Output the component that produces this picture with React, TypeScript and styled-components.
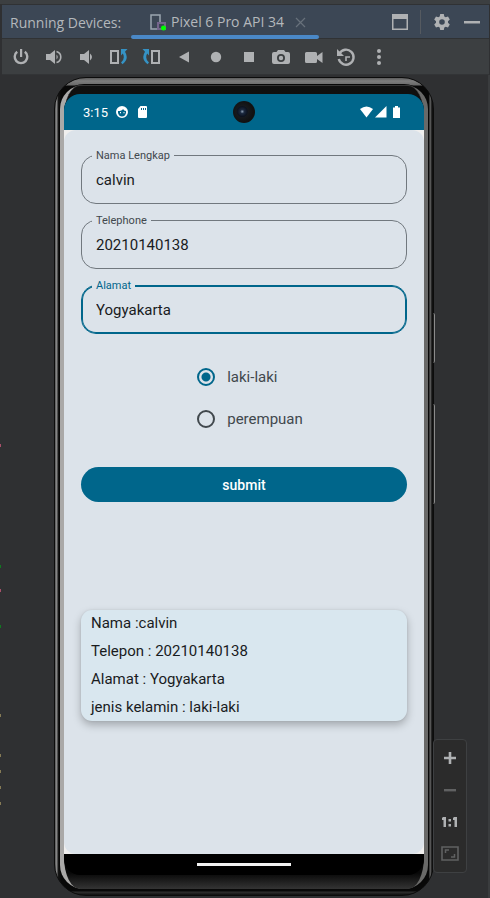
import React, { useState } from "react";
import styled, { createGlobalStyle } from "styled-components";

const GlobalStyle = createGlobalStyle`
  * { box-sizing: border-box; }
  body { margin: 0; background: #2f3032; }
  button, input { font: inherit; color: inherit; }
  button { border: 0; padding: 0; background: none; cursor: pointer; }
  svg { display: block; }
`;

const Window = styled.div`
  min-height: 100vh;
  display: flex;
  flex-direction: column;
  border-top: 4px solid #3c3f41;
  background: #2f3032;
`;

const TitleBar = styled.header`
  height: 35px;
  display: flex;
  align-items: stretch;
  margin: 0 1px 0 2px;
  padding: 0 8px;
  border-top: 1px solid #303234;
  border-bottom: 1px solid #303234;
  background: #3c4755;
  color: #b4b8bc;
  font: 14px/35px "Open Sans", "Noto Sans", sans-serif;
  white-space: nowrap;
`;

const Title = styled.span`
  width: 121px;
  flex: none;
`;

const Tab = styled.div`
  width: 188px;
  flex: none;
  display: flex;
  align-items: center;
  gap: 4px;
  padding-left: 18px;
  position: relative;
  &::after {
    content: "";
    position: absolute;
    inset: auto 0 -1px 0;
    height: 4px;
    border-radius: 2px;
    background: #4a88c7;
  }
`;

const TabName = styled.span`
  width: 119px;
`;

const TitleActions = styled.div`
  flex: 1;
  display: flex;
  justify-content: flex-end;
  align-items: center;
  gap: 12px;
  color: #afb1b3;
`;

const Divider = styled.span`
  width: 1px;
  height: 24px;
  background: #555a60;
`;

const IconButton = styled.button`
  display: flex;
  align-items: center;
  justify-content: center;
`;

const Toolbar = styled.nav`
  height: 36px;
  margin: 0 1px 0 2px;
  background: #3c3f41;
  border-bottom: 1px solid #323436;
  color: #afb1b3;
`;

const ToolGrid = styled.div`
  height: 100%;
  max-width: 393px;
  padding-left: 3px;
  display: grid;
  grid-template-columns: repeat(12, 1fr);
`;

const tick = (color: string, y: number) =>
  `linear-gradient(${color}, ${color}) 0 ${y}px / 1px 3px no-repeat`;

const Stage = styled.main`
  flex: 1;
  display: flex;
  position: relative;
  padding: 2px 56px 2px 54px;
  border-right: 2px solid #3a3c3e;
  background: ${[
    tick("#a8506a", 369),
    tick("#107a20", 490),
    tick("#a8506a", 514),
    tick("#107a20", 550),
    tick("#857a55", 639),
    tick("#857a55", 679),
    tick("#857a55", 695),
    tick("#857a55", 711),
    tick("#857a55", 727),
  ].join(", ")}, #2f3032;
`;

const Phone = styled.div`
  flex: 1;
  display: flex;
  position: relative;
  margin-right: -2px;
  padding: 7px 5px 6px;
  border: 1px solid #0c0c0c;
  border-radius: 32px;
  background: linear-gradient(#5c5c5c 0, #7d7d7d 3px, #6a6a6a 7px, transparent 8px),
    linear-gradient(to top, #101010 0, #303030 3px, #080808 4px, transparent 6px),
    linear-gradient(to right, #444 0, #858585 1px, #858585 2px, #181818 3px, #080808 6px,
      #080808 calc(100% - 4px), #6c6c6c calc(100% - 3px), #101010 calc(100% - 1px));
`;

const SideKey = styled.span<{ $top: number; $height: number }>`
  position: absolute;
  left: 100%;
  top: ${(p) => p.$top}px;
  width: 2px;
  height: ${(p) => p.$height}px;
  border-right: 1px solid #8b8b8b;
  border-radius: 0 2px 2px 0;
  background: #202020;
`;

const Rim = styled.div`
  flex: 1;
  display: flex;
  padding: 0 4px;
  border-radius: 24px;
  background: linear-gradient(to right, #aaa9a8 0, #aaa9a8 50%, #696968 50%);
  box-shadow: 0 0 0 1px #080808;
`;

const Bezel = styled.div`
  flex: 1;
  display: flex;
  padding: 8px 0 14px;
  border-top: 1px solid #343434;
  border-radius: 16px / 32px;
  background: linear-gradient(#101010 0, #080808 50%, #080808 calc(100% - 16px), #343434 100%);
`;

const Screen = styled.section`
  flex: 1;
  min-width: 0;
  display: flex;
  flex-direction: column;
  position: relative;
  overflow: hidden;
  border-radius: 16px;
  background: #000;
  font-family: Roboto, sans-serif;
`;

const StatusBar = styled.div`
  height: 36px;
  display: flex;
  align-items: center;
  gap: 8px;
  padding: 0 21px 0 19px;
  background: #00668b;
  color: #fff;
  font-size: 13px;
`;

const StatusRight = styled.div`
  margin-left: auto;
  display: flex;
  align-items: center;
  gap: 2px;
`;

const Camera = styled.span`
  position: absolute;
  top: 7px;
  left: 50%;
  margin-left: -11px;
  width: 22px;
  height: 22px;
  border-radius: 50%;
  background: radial-gradient(circle at 42% 48%, #8fa0b4 0, #1c2a40 2px, #0d1320 5px, #16191d 6px, #111 11px);
`;

const Surface = styled.div`
  flex: 1;
  background: #f0efee;
`;

const Page = styled.form`
  height: 100%;
  display: flex;
  flex-direction: column;
  padding: 25px 17px 0;
  border-radius: 12px;
  background: #dce3ea;
  color: #191c1e;
  font-size: 15px;
`;

const Fields = styled.div`
  display: flex;
  flex-direction: column;
  gap: 16px;
`;

const Field = styled.div<{ $active: boolean }>`
  position: relative;
  height: 49px;
  border: 1px solid ${(p) => (p.$active ? "#00668b" : "#71787e")};
  border-radius: 15px;
  box-shadow: ${(p) => (p.$active ? "inset 0 0 0 1px #00668b" : "none")};
`;

const FieldLabel = styled.label<{ $active: boolean }>`
  position: absolute;
  top: -7px;
  left: 10px;
  padding: 0 4px;
  background: #dce3ea;
  color: ${(p) => (p.$active ? "#00668b" : "#41484d")};
  font-size: 11px;
  line-height: 14px;
`;

const FieldInput = styled.input`
  width: 100%;
  height: 100%;
  padding: 0 14px;
  border: 0;
  outline: 0;
  background: transparent;
`;

const Choices = styled.div`
  align-self: center;
  margin-top: 22px;
  color: #41484d;
`;

const Choice = styled.label`
  height: 42px;
  display: flex;
  align-items: center;
`;

const Radio = styled.input`
  appearance: none;
  width: 18px;
  height: 18px;
  margin: 0 12px;
  border: 2px solid #41484d;
  border-radius: 50%;
  &:checked {
    border-color: #00668b;
    background: radial-gradient(circle, #00668b 4px, transparent 5px);
  }
`;

const Submit = styled.button`
  height: 35px;
  margin-top: 27px;
  border-radius: 18px;
  background: #00668b;
  color: #fff;
  font-size: 14px;
  font-weight: 500;
`;

const Summary = styled.div`
  display: flex;
  flex-direction: column;
  gap: 1px;
  margin-top: 108px;
  padding-left: 10px;
  border-radius: 11px;
  background: #d9e7ef;
  box-shadow: 0 4px 8px rgba(0, 0, 0, 0.26), 0 0 2px rgba(0, 0, 0, 0.1);
  line-height: 27px;
`;

const NavBar = styled.div`
  height: 21px;
  display: flex;
  justify-content: center;
  padding-top: 9px;
`;

const Handle = styled.span`
  width: 94px;
  height: 3px;
  background: #f2f2f2;
`;

const ZoomPanel = styled.aside`
  position: absolute;
  right: 21px;
  bottom: 25px;
  width: 34px;
  padding: 2px 0;
  display: flex;
  flex-direction: column;
  border: 1px solid #3e4042;
  border-radius: 4px;
  background: #2b2b2b;
`;

const ZoomButton = styled.button<{ $dim?: boolean }>`
  height: 32px;
  display: flex;
  align-items: center;
  justify-content: center;
  color: ${(p) => (p.$dim ? "#606162" : "#afb1b3")};
`;

const Icon = ({ children, size = 20 }: { children: React.ReactNode; size?: number }) => (
  <svg width={size} height={size} viewBox={`0 0 ${size} ${size}`} fill="currentColor" aria-hidden="true">
    {children}
  </svg>
);

const line = { fill: "none", stroke: "currentColor", strokeWidth: 2 };

const tools: { name: string; icon: React.ReactNode }[] = [
  {
    name: "Power",
    icon: <><path d="M6.2 4.8a6.3 6.3 0 1 0 7.6 0" {...line} strokeWidth={2.4} /><path d="M9 2h2.2v8H9z" /></>,
  },
  {
    name: "Volume up",
    icon: <><path d="M2 7h4l5-4v14l-5-4H2z" /><path d="M12.5 7.5q2.500 2.500 0 5z" /><path d="M12.5 4.400a5.800 5.800 0 0 1 0 11.200" {...line} strokeWidth={1.6} /></>,
  },
  { name: "Volume down", icon: <><path d="M4 7h4l5-4v14l-5-4H4z" /><path d="M14 6.500q4 3.500 0 7z" /></> },
  {
    name: "Rotate left",
    icon: <><path d="M2 4h7v12H2z" {...line} /><path d="M12 2h6.500L16 4.800q4.500 7-2.500 12.500l-1.500-1.700q4.500-4 1.800-9L12 8.500z" fill="#3592c4" /></>,
  },
  {
    name: "Rotate right",
    icon: <><path d="M11 4h7v12h-7z" {...line} /><path d="M8 2H1.500L4 4.800q-4.500 7 2.500 12.500L8 15.600q-4.500-4-1.800-9L8 8.500z" fill="#3592c4" /></>,
  },
  { name: "Back", icon: <path d="M5 10l10-5.500v11z" /> },
  { name: "Home", icon: <circle cx="10" cy="10" r="5.2" /> },
  { name: "Overview", icon: <path d="M5 5h10v10H5z" /> },
  {
    name: "Screenshot",
    icon: <path fillRule="evenodd" d="M7 3h6l1.5 2H17q2 0 2 2v8q0 2-2 2H3q-2 0-2-2V7q0-2 2-2h2.5zM10 7a4 4 0 1 0 0 8a4 4 0 0 0 0-8zm0 1.8a2.2 2.2 0 1 1 0 4.400a2.200 2.200 0 0 1 0-4.400z" />,
  },
  { name: "Record", icon: <path d="M2.5 5h9q1.500 0 1.500 1.500V9l5.500-4v11L13 12v2.500q0 1.500-1.500 1.500h-9Q1 16 1 14.500v-8Q1 5 2.500 5z" /> },
  {
    name: "Snapshots",
    icon: <><path d="M3.500 6.500A7.500 7.500 0 1 1 2.800 12" {...line} strokeWidth={2.4} /><path d="M1 2v7h7z" /><path d="M10 14v-4h4" {...line} strokeWidth={1.6} /></>,
  },
  { name: "More", icon: <><circle cx="10" cy="4" r="2" /><circle cx="10" cy="10" r="2" /><circle cx="10" cy="16" r="2" /></> },
];

export default function App() {
  const [values, setValues] = useState({ nama: "calvin", telepon: "20210140138", alamat: "Yogyakarta" });
  const [gender, setGender] = useState("laki-laki");
  const [active, setActive] = useState("alamat");
  const fields: { key: keyof typeof values; label: string }[] = [
    { key: "nama", label: "Nama Lengkap" },
    { key: "telepon", label: "Telephone" },
    { key: "alamat", label: "Alamat" },
  ];

  return (
    <Window>
      <GlobalStyle />
      <TitleBar>
        <Title>Running Devices:</Title>
        <Tab>
          <svg width="18" height="20" viewBox="0 0 18 20" aria-hidden="true">
            <path d="M2 3h9v14H2z" fill="none" stroke="#9aa7b0" strokeWidth="1.5" />
            <path d="M9 11h7v6H9z" fill="#3c4755" stroke="#75658c" strokeWidth="2" />
            <circle cx="14.5" cy="16" r="2.5" fill="#0f0" />
          </svg>
          <TabName>Pixel 6 Pro API 34</TabName>
          <IconButton aria-label="Close tab">
            <svg width="12" height="12" viewBox="0 0 12 12" aria-hidden="true">
              <path d="M2 2l9 9M11 2l-9 9" stroke="#68717b" strokeWidth="1.2" />
            </svg>
          </IconButton>
        </Tab>
        <TitleActions>
          <IconButton aria-label="Window mode">
            <Icon size={16}><path fillRule="evenodd" d="M0 0h16v16H0zM1.500 5v9.500h13V5z" /></Icon>
          </IconButton>
          <Divider />
          <IconButton aria-label="Settings">
            <Icon size={18}>
              <path
                fillRule="evenodd"
                d="M7.200 1h3.600l.5 2.400 1.400.8 2.300-.8 1.800 3.100L15 8.200v1.600l1.800 1.700-1.800 3.100-2.300-.8-1.400.8-.5 2.400H7.200l-.5-2.400-1.400-.8-2.300.8-1.800-3.100L3 9.800V8.200L1.200 6.500 3 3.400l2.300.8 1.400-.8zM9 6.200a2.800 2.800 0 1 0 0 5.600a2.800 2.800 0 0 0 0-5.600z"
              />
            </Icon>
          </IconButton>
          <IconButton aria-label="Hide">
            <Icon size={18}><path d="M1 8h16v2.500H1z" /></Icon>
          </IconButton>
        </TitleActions>
      </TitleBar>

      <Toolbar aria-label="Device controls">
        <ToolGrid>
          {tools.map((t) => (
            <IconButton key={t.name} aria-label={t.name}><Icon>{t.icon}</Icon></IconButton>
          ))}
        </ToolGrid>
      </Toolbar>

      <Stage>
        <Phone>
          <SideKey $top={235} $height={50} />
          <SideKey $top={326} $height={100} />
          <Rim>
            <Bezel>
              <Screen>
                <StatusBar>
                  <span>3:15</span>
                  <Icon size={12}>
                    <path fillRule="evenodd" d="M6 0a6 6 0 1 0 0 12A6 6 0 0 0 6 0zM2 5q4 0 5-2q1 2 3 2v2q-1 3.500-4 3.500T2 7zM4 6v1.300h1V6zm3.500 0v1.300h1V6z" />
                  </Icon>
                  <Icon size={12}>
                    <path fillRule="evenodd" d="M4.500 0H10q1 0 1 1v10q0 1-1 1H3q-1 0-1-1V3zM5 2v2h1V2zm2 0v2h1V2zm2 0v2h1V2z" />
                  </Icon>
                  <StatusRight>
                    <svg width="13" height="12" viewBox="0 0 13 12" fill="#fff" aria-hidden="true"><path d="M0 3q6.500-5 13 0L6.500 11.500z" /></svg>
                    <svg width="12" height="12" viewBox="0 0 12 12" fill="#fff" aria-hidden="true"><path d="M0 11.500L11.500 0v11.500z" /></svg>
                    <svg width="14" height="12" viewBox="0 0 14 12" fill="#fff" aria-hidden="true"><path d="M6 0h3v1.500h2V12H4V1.500h2z" /></svg>
                  </StatusRight>
                </StatusBar>
                <Camera />
                <Surface>
                  <Page onSubmit={(e) => e.preventDefault()}>
                    <Fields>
                      {fields.map((f) => (
                        <Field key={f.key} $active={f.key === active}>
                          <FieldLabel htmlFor={f.key} $active={f.key === active}>{f.label}</FieldLabel>
                          <FieldInput
                            id={f.key}
                            value={values[f.key]}
                            onFocus={() => setActive(f.key)}
                            onChange={(e) => setValues({ ...values, [f.key]: e.target.value })}
                          />
                        </Field>
                      ))}
                    </Fields>
                    <Choices>
                      {["laki-laki", "perempuan"].map((g) => (
                        <Choice key={g}>
                          <Radio type="radio" name="gender" checked={gender === g} onChange={() => setGender(g)} />
                          {g}
                        </Choice>
                      ))}
                    </Choices>
                    <Submit type="submit">submit</Submit>
                    <Summary>
                      <span>Nama :{values.nama}</span>
                      <span>Telepon : {values.telepon}</span>
                      <span>Alamat : {values.alamat}</span>
                      <span>jenis kelamin : {gender}</span>
                    </Summary>
                  </Page>
                </Surface>
                <NavBar><Handle /></NavBar>
              </Screen>
            </Bezel>
          </Rim>
        </Phone>
        <ZoomPanel>
          <ZoomButton aria-label="Zoom in"><Icon><path d="M8.700 4h2.600v4.700H16v2.600h-4.700V16H8.700v-4.700H4V8.700h4.700z" /></Icon></ZoomButton>
          <ZoomButton aria-label="Zoom out" $dim><Icon><path d="M4 9h12v2.400H4z" /></Icon></ZoomButton>
          <ZoomButton aria-label="Actual size">
            <Icon><path d="M3 5h3v10H3.500V8H2V6zM14 5h3v10h-2.500V8H13V6zM8.500 7h2.500v2.500H8.500zM8.500 12H11v2.500H8.500z" /></Icon>
          </ZoomButton>
          <ZoomButton aria-label="Fit to window" $dim>
            <Icon><path d="M2 3h16v13H2z" {...line} strokeWidth={1.6} /><path d="M5.500 9V6H9M11 13h3.500v-3" {...line} strokeWidth={1.5} /></Icon>
          </ZoomButton>
        </ZoomPanel>
      </Stage>
    </Window>
  );
}
